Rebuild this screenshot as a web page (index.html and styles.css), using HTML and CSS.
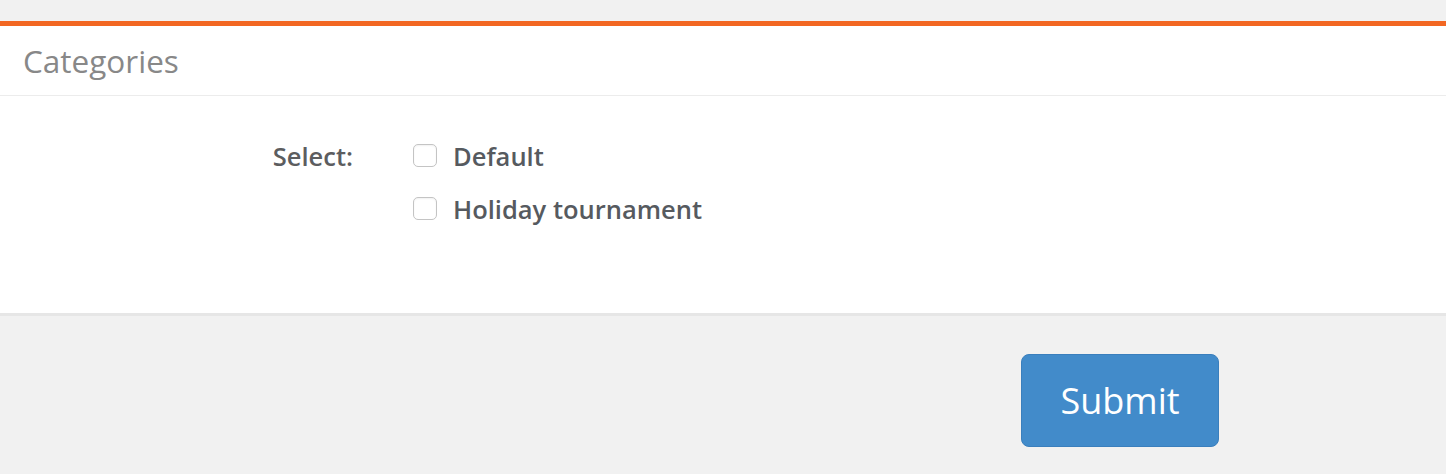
FILE: index.html
```html
<!DOCTYPE html>
<html lang="en">

<head>
    <meta charset="UTF-8">
    <meta name="viewport" content="width=device-width, initial-scale=1.0">
    <title>Categories</title>
    <link rel="stylesheet" href="styles.css">
</head>

<body>
    <form class="panel-form">
        <div class="panel">
            <div class="panel-heading">
                <h3 class="panel-title">Categories</h3>
            </div>
            <div class="panel-body">
                <div class="form-group">
                    <label class="control-label">Select:</label>
                    <div class="options">
                        <label class="checkbox"><input type="checkbox" name="category" value="default"><span>Default</span></label>
                        <label class="checkbox"><input type="checkbox" name="category" value="holiday"><span>Holiday tournament</span></label>
                    </div>
                </div>
            </div>
        </div>
        <div class="form-actions">
            <button type="submit" class="btn-primary">Submit</button>
        </div>
    </form>
</body>

</html>
```

FILE: styles.css
```css
body {
    font-family: "Open Sans", "Liberation Sans", sans-serif;
    background-color: #f1f1f1;
    margin: 0;
    padding: 0;
}

.panel-form {
    margin: 0;
    padding-top: 21px;
}

.panel {
    background-color: #fff;
    border-top: 5px solid #f26722;
    border-bottom: 3px solid #e6e6e6;
}

.panel-heading {
    height: 70px;
    border-bottom: 1px solid #ececec;
    display: flex;
    align-items: center;
    padding: 0 23px;
    box-sizing: border-box;
}

.panel-title {
    margin: 0;
    font-size: 31.5px;
    font-weight: 400;
    color: #888;
}

.panel-body {
    height: 217px;
    box-sizing: border-box;
    padding-top: 38px;
}

.form-group {
    display: flex;
    align-items: flex-start;
}

.control-label {
    width: 354px;
    box-sizing: border-box;
    text-align: right;
    padding-right: 1px;
    font-size: 25.5px;
    font-weight: 600;
    color: #5c5d5f;
    line-height: 44px;
}

.options {
    display: flex;
    flex-direction: column;
    gap: 9px;
    padding-left: 59px;
}

.checkbox {
    display: flex;
    align-items: center;
    height: 44px;
    font-size: 25.5px;
    font-weight: 600;
    color: #565a5f;
    cursor: pointer;
}

.checkbox input {
    appearance: none;
    width: 24px;
    height: 23px;
    margin: 0 16px 0 0;
    border: 1px solid #c4c4c4;
    border-radius: 5px;
    background-color: #fff;
    box-shadow: inset 0 1px 2px rgba(0, 0, 0, 0.06);
    position: relative;
    top: -1px;
}

.form-actions {
    padding: 38px 0 0 1021px;
}

.btn-primary {
    width: 198px;
    height: 93px;
    background-color: #428bca;
    color: #fff;
    border: 1px solid #3a7fbd;
    border-radius: 8px;
    font-family: inherit;
    font-size: 36px;
    font-weight: 400;
    cursor: pointer;
    padding: 0;
}

.btn-primary:hover {
    background-color: #3276b1;
}
```
